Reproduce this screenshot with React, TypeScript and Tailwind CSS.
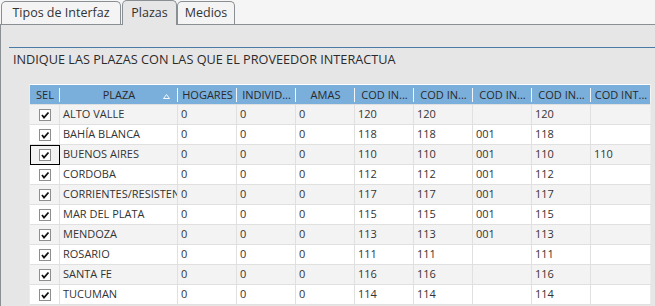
import React from "react";

type Row = {
  plaza: string;
  cods: string[];
};

const rows: Row[] = [
  { plaza: "ALTO VALLE", cods: ["120", "120", "", "120", ""] },
  { plaza: "BAHÍA BLANCA", cods: ["118", "118", "001", "118", ""] },
  { plaza: "BUENOS AIRES", cods: ["110", "110", "001", "110", "110"] },
  { plaza: "CORDOBA", cods: ["112", "112", "001", "112", ""] },
  { plaza: "CORRIENTES/RESISTENCIA", cods: ["117", "117", "001", "117", ""] },
  { plaza: "MAR DEL PLATA", cods: ["115", "115", "001", "115", ""] },
  { plaza: "MENDOZA", cods: ["113", "113", "001", "113", ""] },
  { plaza: "ROSARIO", cods: ["111", "111", "", "111", ""] },
  { plaza: "SANTA FE", cods: ["116", "116", "", "116", ""] },
  { plaza: "TUCUMAN", cods: ["114", "114", "", "114", ""] },
];

const headers = [
  "SEL",
  "PLAZA",
  "HOGARES",
  "INDIVID...",
  "AMAS",
  "COD IN...",
  "COD IN...",
  "COD IN...",
  "COD IN...",
  "COD INT...",
];

// same column widths for header and body
const cols = "grid grid-cols-[30px_118px_59px_59px_59px_59px_59px_59px_59px_60px]";

function Check() {
  return (
    <span className="flex h-[12px] w-[12px] items-center justify-center border border-[#8e8e8e] bg-white">
      <svg width="10" height="10" viewBox="0 0 10 10">
        <path d="M2 5 L4 7.5 L8.5 2.5" fill="none" stroke="#111" strokeWidth="1.8" />
      </svg>
    </span>
  );
}

function Tab({ label, active, className }: { label: string; active?: boolean; className: string }) {
  return (
    <div
      className={
        "flex items-center justify-center rounded-t-[5px] border border-b-0 border-[#8a8f94] text-[12.5px] text-[#333] " +
        (active ? "relative z-10 -mb-px h-[25px] bg-[#e6e6e6]" : "h-[23px] bg-[#f4f4f4]") +
        " " +
        className
      }
    >
      {label}
    </div>
  );
}

export default function App() {
  return (
    <div className="h-[306px] w-[655px] overflow-hidden bg-[#f5f5f5] font-['Open_Sans',sans-serif]">
      {/* tabs */}
      <div className="flex h-[24px] items-end">
        <Tab label="Tipos de Interfaz" className="ml-[1px] w-[120px]" />
        <Tab label="Plazas" active className="ml-[1px] w-[55px]" />
        <Tab label="Medios" className="w-[58px]" />
      </div>

      {/* panel */}
      <div className="h-[282px] border-l border-t border-[#8a8f94] bg-[#e6e6e6]">
        <div className="ml-[8px] mt-[22px] border-t border-[#4a7aa6] pl-[4px]">
          <h1 className="mt-[1px] h-[20px] text-[12.7px] leading-[20px] text-[#2b2b2b]">
            INDIQUE LAS PLAZAS CON LAS QUE EL PROVEEDOR INTERACTUA
          </h1>
        </div>

        <div className="ml-[28px] mt-[15px] w-[622px] border-x border-[#ececec]">
          {/* header */}
          <div className={cols + " h-[21px] border-b border-t border-[#e0e0e0] border-t-white bg-[#7aaedb] text-[11px] text-[#2a2a2a]"}>
            {headers.map((h, i) => (
              <div
                key={i}
                className="relative flex items-center justify-center overflow-hidden whitespace-nowrap leading-none after:absolute after:bottom-[2px] after:right-0 after:top-[3px] after:w-px after:bg-[#f2f6fa]"
              >
                {h}
                {i === 1 && (
                  <svg className="absolute right-[8px] top-[9px]" width="7" height="5" viewBox="0 0 7 5">
                    <path d="M3.5 0.5 L6.5 4.5 L0.5 4.5 Z" fill="none" stroke="#f4f8fc" strokeWidth="1" />
                  </svg>
                )}
              </div>
            ))}
          </div>

          {/* body */}
          {rows.map((r, i) => (
            <div
              key={r.plaza}
              className={cols + " h-[20px] text-[11px] text-[#333] " + (i % 2 === 0 ? "bg-[#f3f3f3]" : "bg-white")}
            >
              <div
                className={
                  "flex items-center justify-center border-b border-r border-[#e0e0e0] " +
                  (i === 2 ? "outline outline-1 -outline-offset-1 outline-black" : "")
                }
              >
                <Check />
              </div>
              <div className="flex items-center overflow-hidden whitespace-nowrap border-b border-r border-[#e0e0e0] pl-[3px]">
                {r.plaza}
              </div>
              {["0", "0", "0", ...r.cods].map((v, j) => (
                <div key={j} className="flex items-center border-b border-r border-[#e0e0e0] pl-[3px] last:border-r-0">
                  {v}
                </div>
              ))}
            </div>
          ))}
        </div>
      </div>
    </div>
  );
}
